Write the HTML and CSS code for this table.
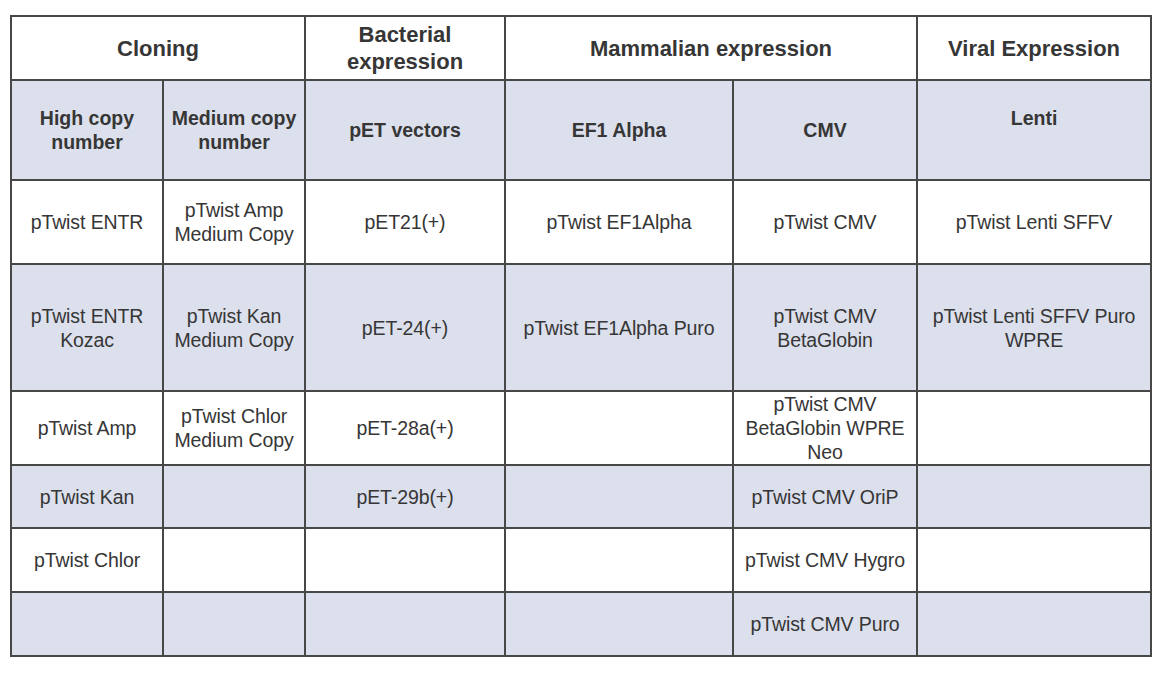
FILE: index.html
```html
<!DOCTYPE html>
<html>
<head>
<meta charset="utf-8">
<link rel="stylesheet" href="styles.css">
</head>
<body>
<table class="grid">
  <colgroup>
    <col class="c1"><col class="c2"><col class="c3"><col class="c4"><col class="c5"><col class="c6">
  </colgroup>
  <tr class="r-group">
    <th colspan="2" class="group">Cloning</th>
    <th class="group">Bacterial<br>expression</th>
    <th colspan="2" class="group">Mammalian expression</th>
    <th class="group">Viral Expression</th>
  </tr>
  <tr class="r-sub shade">
    <th class="sub">High copy<br>number</th>
    <th class="sub">Medium copy<br>number</th>
    <th class="sub">pET vectors</th>
    <th class="sub">EF1 Alpha</th>
    <th class="sub">CMV</th>
    <th class="sub lenti">Lenti</th>
  </tr>
  <tr class="r3">
    <td>pTwist ENTR</td>
    <td>pTwist Amp<br>Medium Copy</td>
    <td>pET21(+)</td>
    <td>pTwist EF1Alpha</td>
    <td>pTwist CMV</td>
    <td>pTwist Lenti SFFV</td>
  </tr>
  <tr class="r4 shade">
    <td>pTwist ENTR<br>Kozac</td>
    <td>pTwist Kan<br>Medium Copy</td>
    <td>pET-24(+)</td>
    <td>pTwist EF1Alpha Puro</td>
    <td>pTwist CMV<br>BetaGlobin</td>
    <td>pTwist Lenti SFFV Puro<br>WPRE</td>
  </tr>
  <tr class="r5">
    <td>pTwist Amp</td>
    <td>pTwist Chlor<br>Medium Copy</td>
    <td>pET-28a(+)</td>
    <td></td>
    <td>pTwist CMV<br>BetaGlobin WPRE<br>Neo</td>
    <td></td>
  </tr>
  <tr class="r6 shade">
    <td>pTwist Kan</td>
    <td></td>
    <td>pET-29b(+)</td>
    <td></td>
    <td>pTwist CMV OriP</td>
    <td></td>
  </tr>
  <tr class="r7">
    <td>pTwist Chlor</td>
    <td></td>
    <td></td>
    <td></td>
    <td>pTwist CMV Hygro</td>
    <td></td>
  </tr>
  <tr class="r8 shade">
    <td></td>
    <td></td>
    <td></td>
    <td></td>
    <td>pTwist CMV Puro</td>
    <td></td>
  </tr>
</table>
</body>
</html>
```

FILE: styles.css
```css
html, body {
  background: #ffffff;
}
body {
  margin: 15px 0 0 10px;
  font-family: "Liberation Sans", Arial, sans-serif;
  color: #363636;
}
.grid {
  border-collapse: collapse;
  table-layout: fixed;
  width: 1142px;
}
.c1 { width: 152px; }
.c2 { width: 142px; }
.c3 { width: 200px; }
.c4 { width: 228px; }
.c5 { width: 184px; }
.c6 { width: 234px; }
.grid th,
.grid td {
  border: 2px solid #474747;
  padding: 0;
  text-align: center;
  vertical-align: middle;
  overflow: hidden;
}
.grid td {
  font-size: 19.5px;
  line-height: 24px;
  font-weight: normal;
  letter-spacing: -0.1px;
}
.grid .group {
  font-size: 22px;
  line-height: 27px;
  font-weight: bold;
}
.grid .sub {
  font-size: 19.5px;
  line-height: 24px;
  font-weight: bold;
}
.grid .lenti {
  vertical-align: top;
  padding-top: 25px;
}
.shade th,
.shade td {
  background: #dcdfec;
}
.r-group { height: 64px; }
.r-sub { height: 100px; }
.r3 { height: 84px; }
.r4 { height: 127px; }
.r5 { height: 72px; }
.r6 { height: 63px; }
.r7 { height: 64px; }
.r8 { height: 64px; }
```
